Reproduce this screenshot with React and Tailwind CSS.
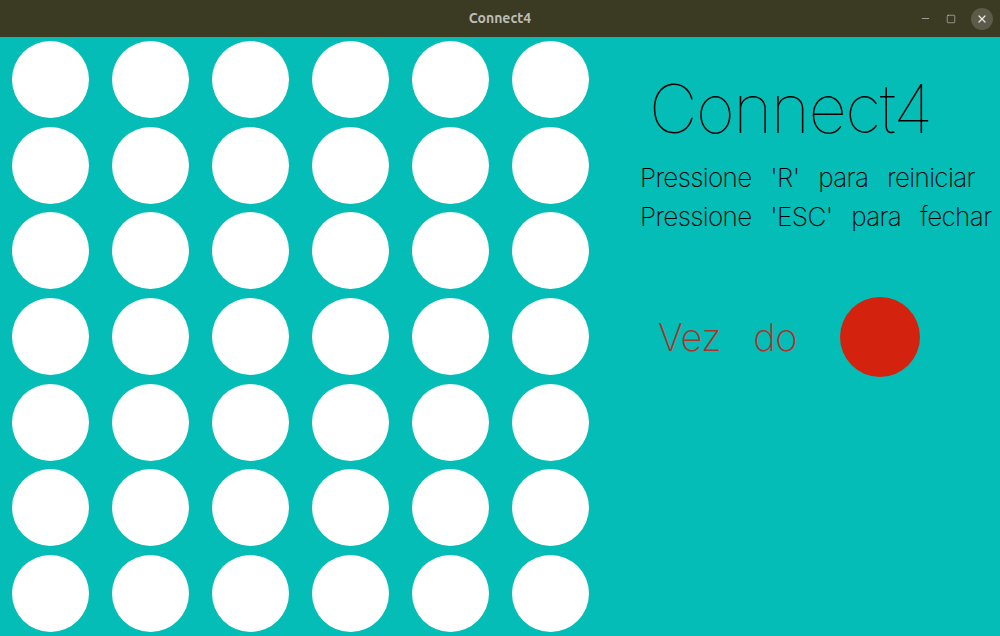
import { Minus, Square, X } from 'lucide-react'

const ROWS = 7
const COLS = 6

function TitleBar() {
  return (
    <div className="relative flex h-[37px] items-center justify-center bg-[#3b3a23]">
      <span className="text-[14px] font-bold text-[#bdbdb4]" style={{ fontFamily: 'Ubuntu, "DejaVu Sans", sans-serif' }}>
        Connect4
      </span>
      <div className="absolute right-[7px] top-0 flex h-full items-center gap-[15px] text-[#c8c8c0]">
        <Minus size={11} strokeWidth={1.5} />
        <Square size={10} strokeWidth={1.5} />
        <div className="flex h-[22px] w-[22px] items-center justify-center rounded-full bg-[#5c5b4a]">
          <X size={12} strokeWidth={2.5} className="text-[#e8e8e0]" />
        </div>
      </div>
    </div>
  )
}

function Board() {
  const cells = Array.from({ length: ROWS * COLS })
  return (
    <div className="grid h-[599px] w-[600px] shrink-0 grid-cols-6 grid-rows-7">
      {cells.map((_, i) => (
        <div key={i} className="flex items-center justify-center">
          <div className="h-[77px] w-[77px] rounded-full bg-white" />
        </div>
      ))}
    </div>
  )
}

export default function App() {
  return (
    <div className="flex h-[636px] w-[1000px] flex-col overflow-hidden bg-[#04bdb6]" style={{ fontFamily: 'Inter, "Noto Sans", sans-serif' }}>
      <TitleBar />
      <div className="flex flex-1">
        <Board />

        {/* info */}
        <div className="flex min-w-0 flex-1 flex-col whitespace-nowrap pl-[40px]">
          <h1 className="mt-[38px] pl-[9px] text-[67px] font-thin leading-[1] tracking-[-1.5px] text-black">Connect4</h1>
          <div className="mt-[16px] text-[26px] font-extralight leading-[39px] tracking-[-0.6px] text-black [word-spacing:12px]">
            <p>Pressione 'R' para reiniciar</p>
            <p>Pressione 'ESC' para fechar</p>
          </div>
          <div className="mt-[61px] flex items-center">
            <span className="ml-[18px] text-[38px] font-extralight tracking-[-0.5px] text-[#ad322b] [word-spacing:22px]">Vez do</span>
            <div className="ml-[43px] h-[80px] w-[80px] shrink-0 rounded-full bg-[#d3220e]" />
          </div>
        </div>
      </div>
    </div>
  )
}
